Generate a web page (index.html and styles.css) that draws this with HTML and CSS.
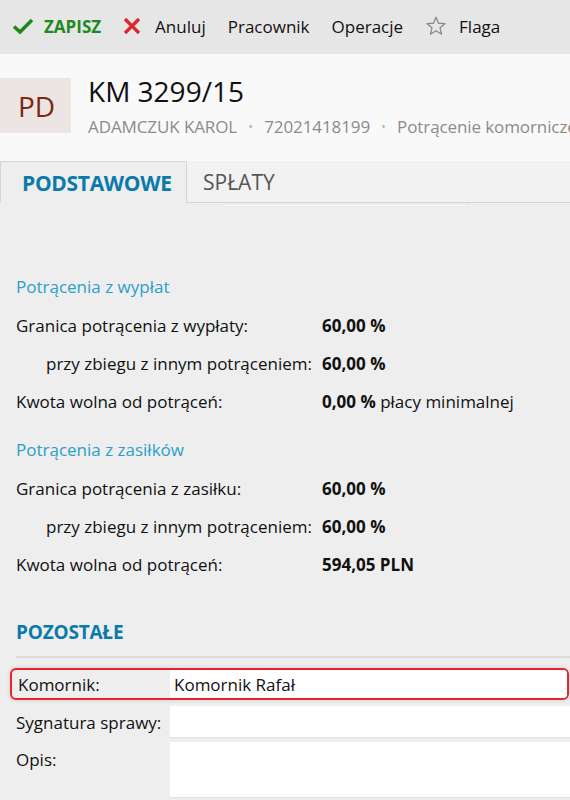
FILE: index.html
```html
<!DOCTYPE html>
<html lang="pl">
<head>
<meta charset="utf-8">
<link rel="stylesheet" href="styles.css">
</head>
<body>
<div class="toolbar">
  <span class="tb-item save">
    <svg width="22" height="18" viewBox="0 0 22 18"><path d="M2 9.5 L8 15 L20 3" fill="none" stroke="#1e8a1e" stroke-width="3.6"/></svg>
    ZAPISZ
  </span>
  <span class="tb-item cancel">
    <svg width="18" height="18" viewBox="0 0 18 18"><path d="M2 2 L16 16 M16 2 L2 16" fill="none" stroke="#e0262b" stroke-width="3.2"/></svg>
    Anuluj
  </span>
  <span class="tb-item">Pracownik</span>
  <span class="tb-item">Operacje</span>
  <span class="tb-item flag">
    <svg width="22" height="22" viewBox="0 0 24 24"><path d="M12 2.5 L14.8 9 L21.8 9.5 L16.4 14 L18.1 21 L12 17.2 L5.9 21 L7.6 14 L2.2 9.5 L9.2 9 Z" fill="none" stroke="#8a8a8a" stroke-width="1.4" stroke-linejoin="round"/></svg>
    Flaga
  </span>
</div>

<div class="header">
  <div class="avatar">PD</div>
  <div class="head-text">
    <div class="title">KM 3299/15</div>
    <div class="subtitle">ADAMCZUK KAROL <span class="dot">•</span> 72021418199 <span class="dot">•</span> Potrącenie komornicze</div>
  </div>
</div>

<div class="tabs">
  <div class="tab active">PODSTAWOWE</div>
  <div class="tab">SPŁATY</div>
  <div class="tab-fill"></div>
</div>

<div class="content">
  <div class="scroll-indicator"></div>
  <div class="group-title first">Potrącenia z wypłat</div>
  <div class="row"><span class="label">Granica potrącenia z wypłaty:</span><span class="value"><b>60,00 %</b></span></div>
  <div class="row"><span class="label indent">przy zbiegu z innym potrąceniem:</span><span class="value"><b>60,00 %</b></span></div>
  <div class="row"><span class="label">Kwota wolna od potrąceń:</span><span class="value"><b>0,00 %</b> płacy minimalnej</span></div>

  <div class="group-title">Potrącenia z zasiłków</div>
  <div class="row"><span class="label">Granica potrącenia z zasiłku:</span><span class="value"><b>60,00 %</b></span></div>
  <div class="row"><span class="label indent">przy zbiegu z innym potrąceniem:</span><span class="value"><b>60,00 %</b></span></div>
  <div class="row"><span class="label">Kwota wolna od potrąceń:</span><span class="value"><b>594,05 PLN</b></span></div>

  <div class="section-title">POZOSTAŁE</div>
  <div class="divider"></div>

  <div class="field highlighted">
    <span class="f-label">Komornik:</span>
    <span class="f-input">Komornik Rafał</span>
  </div>
  <div class="field">
    <span class="f-label">Sygnatura sprawy:</span>
    <span class="f-input"></span>
  </div>
  <div class="field tall">
    <span class="f-label">Opis:</span>
    <span class="f-input"></span>
  </div>
</div>
</body>
</html>
```
FILE: styles.css
```css
* { box-sizing: border-box; }
html, body { margin: 0; padding: 0; }
body {
  width: 570px;
  height: 800px;
  overflow: hidden;
  background: #eeeeee;
  font-family: "Open Sans", "Noto Sans", sans-serif;
  color: #111;
}
.toolbar {
  height: 54px;
  background: #e6e6e6;
  display: flex;
  align-items: center;
  padding: 0 0 2px 12px;
  gap: 22px;
  font-size: 17px;
}
.tb-item { display: flex; align-items: center; gap: 10px; white-space: nowrap; flex-shrink: 0; }
.tb-item svg { display: block; }
.save { color: #1e8a1e; font-weight: 700; }
.cancel { gap: 14px; }
.flag { gap: 12px; }
.header {
  background: #f9f9f9;
  height: 107px;
  display: flex;
  align-items: flex-start;
  padding-top: 24px;
  gap: 17px;
  overflow: hidden;
}
.avatar {
  flex-shrink: 0;
  width: 71px;
  height: 55px;
  background: #ede5e3;
  color: #7a2a0c;
  font-size: 28px;
  display: flex;
  align-items: center;
  justify-content: center;
  padding-left: 2px;
}
.head-text { white-space: nowrap; }
.title { font-size: 28px; line-height: 34px; margin-top: -4px; }
.subtitle { font-size: 17px; line-height: 23px; color: #8b8b8b; margin-top: 7px; letter-spacing: -0.1px; }
.dot { color: #b4b4b4; font-size: 12px; margin: 0 7px; position: relative; top: -2px; }
.tabs { display: flex; height: 42px; background: #f2f2f2; }
.tab {
  font-size: 21px;
  color: #555;
  padding: 0 16px;
  display: flex;
  align-items: center;
  border-bottom: 1px solid #d6d6d6;
}
.tab.active {
  width: 187px;
  padding-left: 21px;
  background: #eeeeee;
  color: #0a7aab;
  font-weight: 700;
  border: 1px solid #d6d6d6;
  border-bottom: none;
  letter-spacing: -0.3px;
}
.tab-fill { flex: 1; border-bottom: 1px solid #d6d6d6; }
.content { padding: 0 0 0 16px; }
.scroll-indicator {
  margin: 1px 0 0 207px;
  width: 245px;
  height: 3px;
  background: #fff;
  border: 1px solid #e6e6e6;
}
.group-title { color: #2b9fcb; font-size: 17px; line-height: 40px; height: 40px; margin-top: 9px; }
.group-title.first { margin-top: 60px; }
.row { display: flex; height: 38px; line-height: 38px; font-size: 17px; }
.label { width: 306px; }
.label.indent { padding-left: 30px; }
.value b { font-weight: 700; }
.section-title {
  margin-top: 30px;
  color: #0a7aab;
  font-weight: 700;
  font-size: 19px;
  line-height: 36px;
  height: 36px;
  letter-spacing: -0.2px;
}
.divider { height: 2px; background: #dcdcdc; margin: 6px 0 10px; }
.field {
  display: flex;
  height: 32px;
  margin-bottom: 4px;
  font-size: 17px;
}
.f-label { width: 154px; display: flex; align-items: center; }
.f-input {
  flex: 1;
  background: #fff;
  border-bottom: 1px solid #e2e2e2;
  display: flex;
  align-items: center;
  padding-left: 4px;
}
.field.highlighted {
  margin-left: -6px;
  margin-right: 1px;
  padding-left: 6px;
  border: 2px solid #e8232b;
  border-radius: 6px;
  box-shadow: 0 0 4px rgba(0,0,0,0.15);
  overflow: hidden;
  margin-bottom: 6px;
}
.field.highlighted .f-label { width: 152px; }
.field.highlighted .f-input { border-bottom: none; }
.field.tall { height: 56px; }
.field.tall .f-label { align-items: flex-start; padding-top: 6px; }
```
